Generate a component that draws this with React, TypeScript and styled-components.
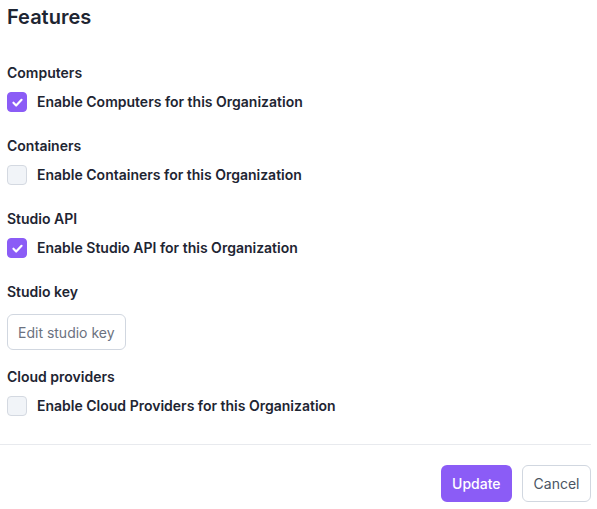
import React from "react";
import styled, { createGlobalStyle } from "styled-components";

const GlobalStyle = createGlobalStyle`
  html, body { margin: 0; padding: 0; background: #ffffff; }
  body { font-family: Inter, "Noto Sans", sans-serif; color: #1f2937; -webkit-font-smoothing: antialiased; }
  * { box-sizing: border-box; }
`;

const Page = styled.div`
  width: 591px;
  display: flex;
  flex-direction: column;
`;

const Body = styled.div`
  padding: 3px 0 0 7px;
  display: flex;
  flex-direction: column;
`;

const Title = styled.h2`
  margin: 0 0 32px;
  font-size: 20px;
  line-height: 28px;
  font-weight: 600;
  color: #1e2532;
`;

const Section = styled.div<{ $gap?: number; $after?: number }>`
  display: flex;
  flex-direction: column;
  gap: ${(p) => p.$gap ?? 9}px;
  margin-bottom: ${(p) => p.$after ?? 24}px;
`;

const SectionLabel = styled.div`
  font-size: 14px;
  line-height: 20px;
  font-weight: 600;
  color: #1e2532;
`;

const CheckRow = styled.label`
  display: flex;
  align-items: center;
  gap: 10px;
  font-size: 14px;
  line-height: 20px;
  font-weight: 600;
  color: #1e2532;
  cursor: pointer;
`;

const Box = styled.span<{ $checked: boolean }>`
  width: 20px;
  height: 20px;
  border-radius: 4px;
  display: inline-flex;
  align-items: center;
  justify-content: center;
  flex-shrink: 0;
  background: ${(p) => (p.$checked ? "#8b5cf6" : "#f1f4f8")};
  border: 1px solid ${(p) => (p.$checked ? "#8b5cf6" : "#d4d9e1")};
`;

const OutlineButton = styled.button`
  align-self: flex-start;
  height: 36px;
  padding: 0 10px;
  border: 1px solid #d1d7e0;
  border-radius: 6px;
  background: #ffffff;
  font-family: inherit;
  font-size: 14px;
  font-weight: 400;
  color: #6b7280;
`;

const Divider = styled.hr`
  margin: 0;
  border: none;
  border-top: 1px solid #e8eaee;
`;

const Footer = styled.div`
  display: flex;
  justify-content: flex-end;
  gap: 10px;
  padding-top: 20px;
`;

const PrimaryButton = styled.button`
  height: 37px;
  padding: 0 11.5px;
  border: none;
  border-radius: 6px;
  background: #8b5cf6;
  color: #ffffff;
  font-family: inherit;
  font-size: 14px;
  font-weight: 500;
`;

const SecondaryButton = styled.button`
  height: 37px;
  padding: 0 10.5px;
  border: 1px solid #d1d7e0;
  border-radius: 6px;
  background: #ffffff;
  color: #4b5563;
  font-family: inherit;
  font-size: 14px;
  font-weight: 400;
`;

const Check = () => (
  <svg width="13" height="13" viewBox="0 0 24 24" fill="none" stroke="#ffffff" strokeWidth="4" strokeLinecap="round" strokeLinejoin="round">
    <polyline points="4.5 12.5 9.5 17.5 19.5 7" />
  </svg>
);

const Checkbox = ({ checked, label }: { checked: boolean; label: string }) => (
  <CheckRow>
    <Box $checked={checked}>{checked && <Check />}</Box>
    {label}
  </CheckRow>
);

export default function App() {
  return (
    <>
      <GlobalStyle />
      <Page>
        <Body>
          <Title>Features</Title>
          <Section>
            <SectionLabel>Computers</SectionLabel>
            <Checkbox checked label="Enable Computers for this Organization" />
          </Section>
          <Section>
            <SectionLabel>Containers</SectionLabel>
            <Checkbox checked={false} label="Enable Containers for this Organization" />
          </Section>
          <Section>
            <SectionLabel>Studio API</SectionLabel>
            <Checkbox checked label="Enable Studio API for this Organization" />
          </Section>
          <Section $gap={12} $after={17}>
            <SectionLabel>Studio key</SectionLabel>
            <OutlineButton>Edit studio key</OutlineButton>
          </Section>
          <Section $after={28}>
            <SectionLabel>Cloud providers</SectionLabel>
            <Checkbox checked={false} label="Enable Cloud Providers for this Organization" />
          </Section>
        </Body>
        <Divider />
        <Footer>
          <PrimaryButton>Update</PrimaryButton>
          <SecondaryButton>Cancel</SecondaryButton>
        </Footer>
      </Page>
    </>
  );
}
